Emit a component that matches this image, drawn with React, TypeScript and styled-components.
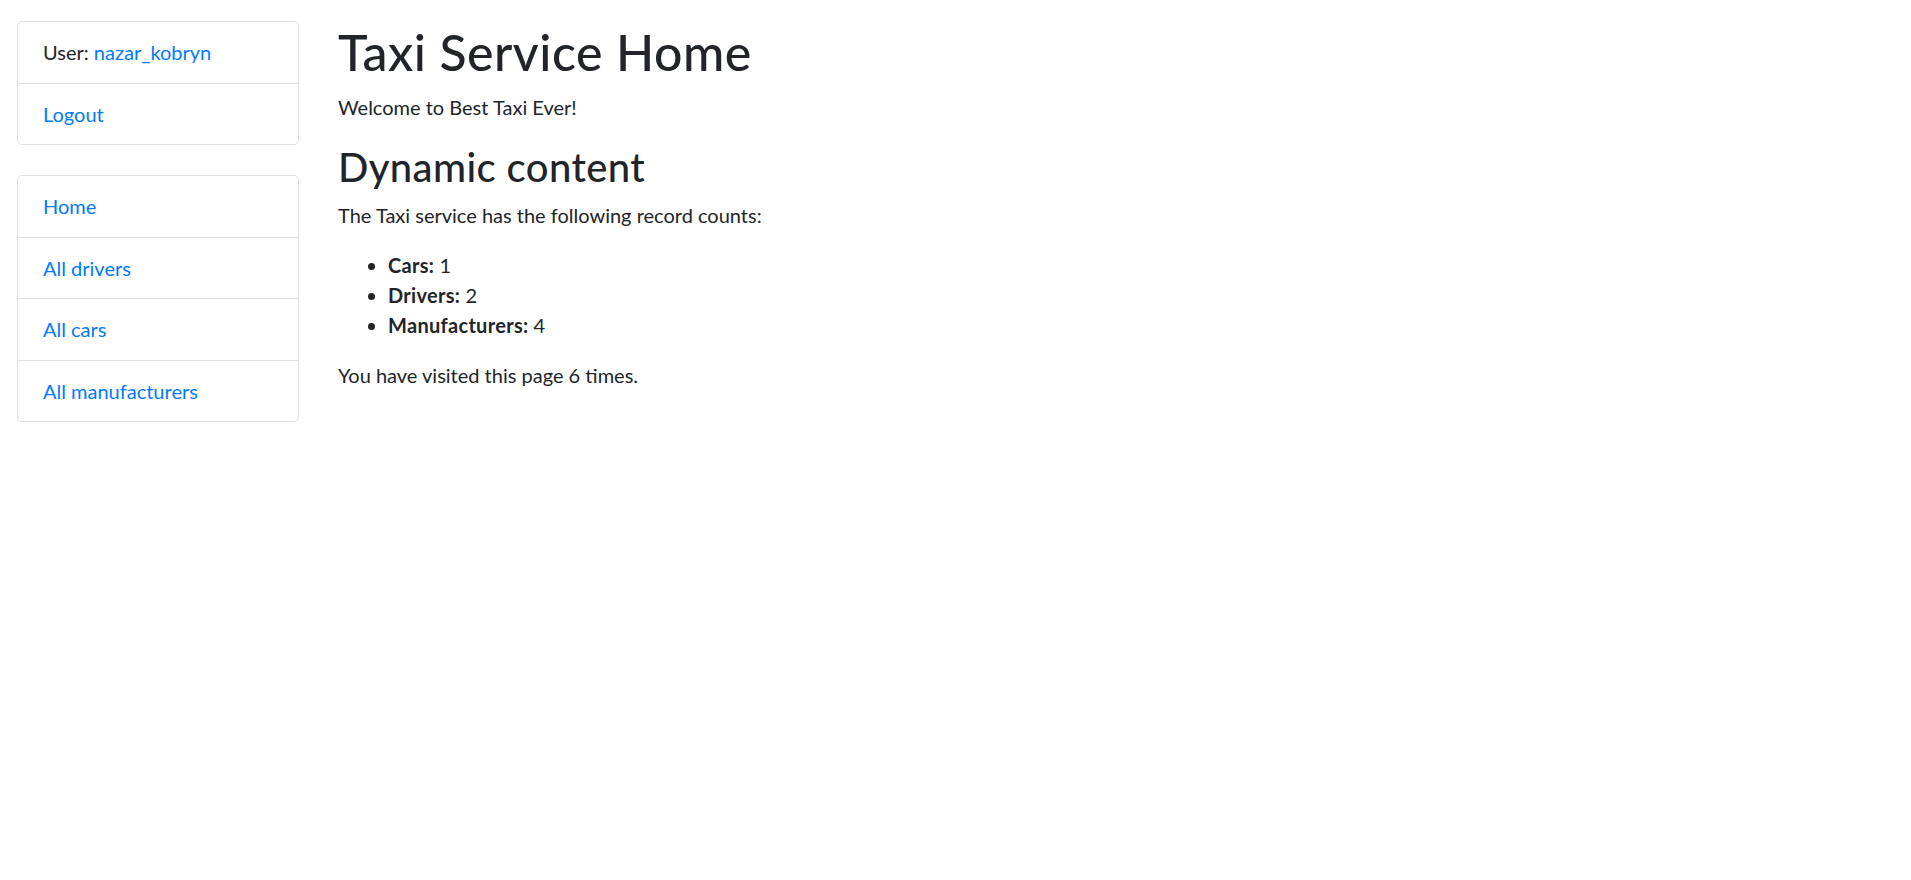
import React from "react";
import styled, { createGlobalStyle } from "styled-components";

const GlobalStyle = createGlobalStyle`
  html, body { margin: 0; padding: 0; background: #fff; }
  body {
    font-family: Lato, "Noto Sans", "Liberation Sans", sans-serif;
    font-size: 20px;
    line-height: 1.5;
    color: #212529;
  }
  * { box-sizing: border-box; }
`;

const Page = styled.div`
  display: flex;
  align-items: flex-start;
  gap: 39px;
  padding: 21px 0 0 17px;
`;

const Sidebar = styled.aside`
  width: 282px;
  flex: none;
  display: flex;
  flex-direction: column;
  gap: 30px;
`;

const ListGroup = styled.ul`
  list-style: none;
  margin: 0;
  padding: 0;
  border: 1px solid rgba(0, 0, 0, 0.125);
  border-radius: 5px;
`;

const ListItem = styled.li`
  padding: 15px 25px;
  line-height: 30.5px;
  & + & {
    border-top: 1px solid rgba(0, 0, 0, 0.125);
  }
`;

const Link = styled.a`
  color: #007bff;
  text-decoration: none;
`;

const Main = styled.main`
  flex: 1;
  padding-top: 1px;
`;

const Title = styled.h1`
  margin: 0 0 10px;
  font-size: 50px;
  font-weight: 500;
  line-height: 60px;
  letter-spacing: 0.5px;
`;

const Subtitle = styled.h2`
  margin: 0 0 9px;
  padding-top: 1px;
  font-size: 40px;
  font-weight: 500;
  line-height: 48px;
  letter-spacing: 0.4px;
`;

const Text = styled.p`
  margin: 0 0 20px;
  line-height: 30px;
`;

const Counts = styled.ul`
  margin: 0 0 20px;
  padding-left: 50px;
  line-height: 30px;
`;

const Label = styled.b`
  font-weight: 700;
  letter-spacing: 0.3px;
`;

const counts = [
  { label: "Cars", value: 1 },
  { label: "Drivers", value: 2 },
  { label: "Manufacturers", value: 4 },
];

const nav = ["Home", "All drivers", "All cars", "All manufacturers"];

export default function App() {
  return (
    <>
      <GlobalStyle />
      <Page>
        <Sidebar>
          <ListGroup>
            <ListItem>
              User: <Link href="#">nazar_kobryn</Link>
            </ListItem>
            <ListItem>
              <Link href="#">Logout</Link>
            </ListItem>
          </ListGroup>
          <ListGroup>
            {nav.map((n) => (
              <ListItem key={n}>
                <Link href="#">{n}</Link>
              </ListItem>
            ))}
          </ListGroup>
        </Sidebar>
        <Main>
          <Title>Taxi Service Home</Title>
          <Text>Welcome to Best Taxi Ever!</Text>
          <Subtitle>Dynamic content</Subtitle>
          <Text>The Taxi service has the following record counts:</Text>
          <Counts>
            {counts.map((c) => (
              <li key={c.label}>
                <Label>{c.label}:</Label> {c.value}
              </li>
            ))}
          </Counts>
          <Text>You have visited this page 6 times.</Text>
        </Main>
      </Page>
    </>
  );
}
